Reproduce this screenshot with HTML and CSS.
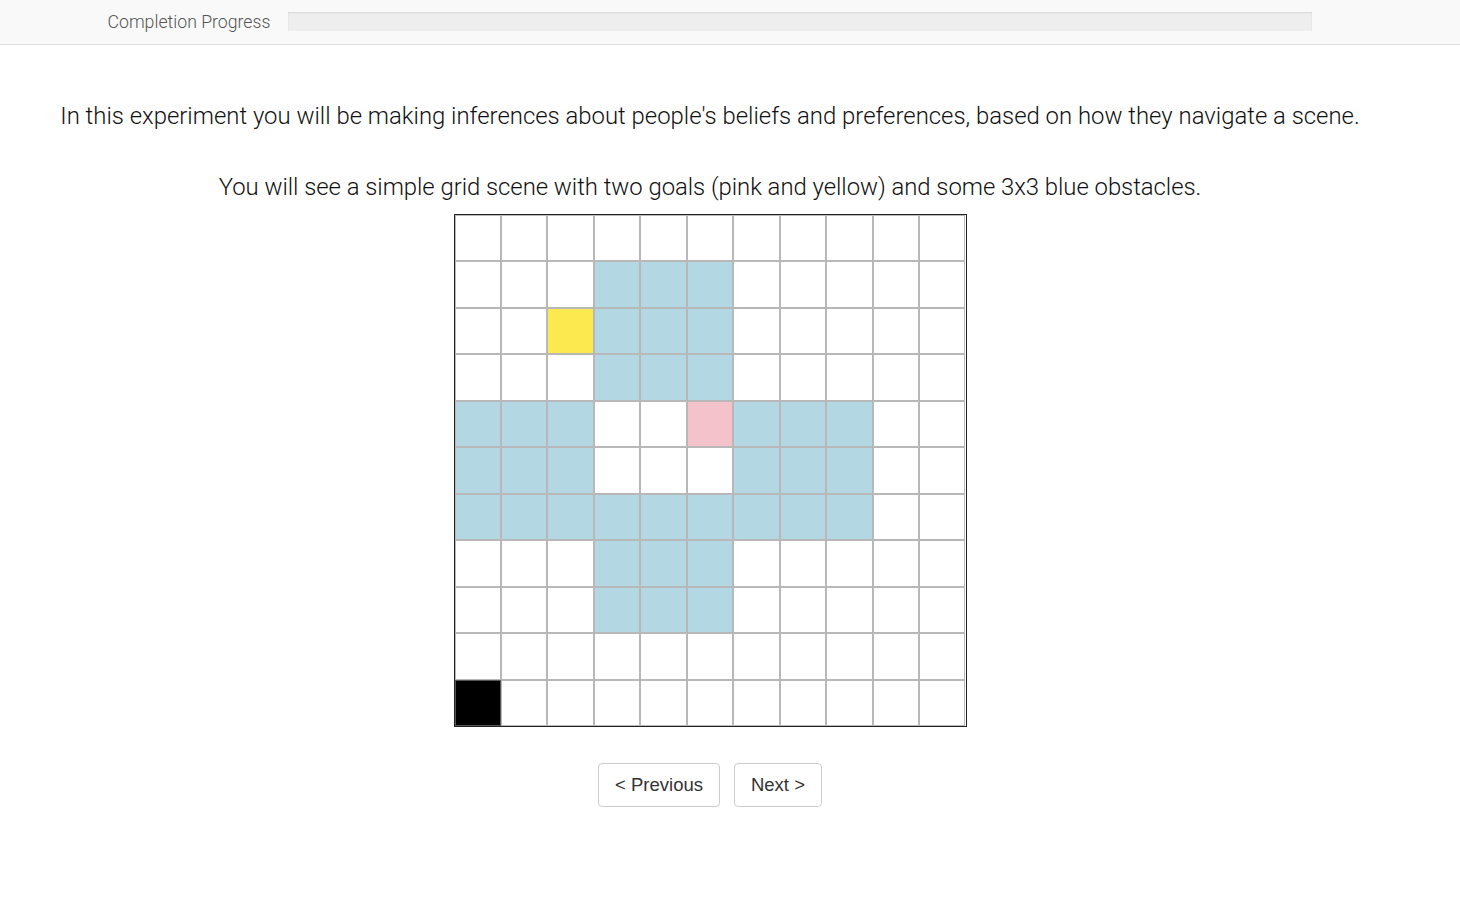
FILE: index.html
```html
<!DOCTYPE html>
<html>
<head>
<meta charset="utf-8">
<link rel="stylesheet" href="styles.css">
</head>
<body>
<header class="progress">
  <div class="progress-inner">
    <span class="progress-label">Completion Progress</span>
    <div class="progress-outer"><div class="progress-inner-bar"></div></div>
  </div>
</header>
<main class="content">
  <p class="line1">In this experiment you will be making inferences about people's beliefs and preferences, based on how they navigate a scene.</p>
  <p class="line2">You will see a simple grid scene with two goals (pink and yellow) and some 3x3 blue obstacles.</p>
  <div class="grid">
    <div class="c"></div><div class="c"></div><div class="c"></div><div class="c"></div><div class="c"></div><div class="c"></div><div class="c"></div><div class="c"></div><div class="c"></div><div class="c"></div><div class="c"></div>
    <div class="c"></div><div class="c"></div><div class="c"></div><div class="c b"></div><div class="c b"></div><div class="c b"></div><div class="c"></div><div class="c"></div><div class="c"></div><div class="c"></div><div class="c"></div>
    <div class="c"></div><div class="c"></div><div class="c y"></div><div class="c b"></div><div class="c b"></div><div class="c b"></div><div class="c"></div><div class="c"></div><div class="c"></div><div class="c"></div><div class="c"></div>
    <div class="c"></div><div class="c"></div><div class="c"></div><div class="c b"></div><div class="c b"></div><div class="c b"></div><div class="c"></div><div class="c"></div><div class="c"></div><div class="c"></div><div class="c"></div>
    <div class="c b"></div><div class="c b"></div><div class="c b"></div><div class="c"></div><div class="c"></div><div class="c p"></div><div class="c b"></div><div class="c b"></div><div class="c b"></div><div class="c"></div><div class="c"></div>
    <div class="c b"></div><div class="c b"></div><div class="c b"></div><div class="c"></div><div class="c"></div><div class="c"></div><div class="c b"></div><div class="c b"></div><div class="c b"></div><div class="c"></div><div class="c"></div>
    <div class="c b"></div><div class="c b"></div><div class="c b"></div><div class="c b"></div><div class="c b"></div><div class="c b"></div><div class="c b"></div><div class="c b"></div><div class="c b"></div><div class="c"></div><div class="c"></div>
    <div class="c"></div><div class="c"></div><div class="c"></div><div class="c b"></div><div class="c b"></div><div class="c b"></div><div class="c"></div><div class="c"></div><div class="c"></div><div class="c"></div><div class="c"></div>
    <div class="c"></div><div class="c"></div><div class="c"></div><div class="c b"></div><div class="c b"></div><div class="c b"></div><div class="c"></div><div class="c"></div><div class="c"></div><div class="c"></div><div class="c"></div>
    <div class="c"></div><div class="c"></div><div class="c"></div><div class="c"></div><div class="c"></div><div class="c"></div><div class="c"></div><div class="c"></div><div class="c"></div><div class="c"></div><div class="c"></div>
    <div class="c k"></div><div class="c"></div><div class="c"></div><div class="c"></div><div class="c"></div><div class="c"></div><div class="c"></div><div class="c"></div><div class="c"></div><div class="c"></div><div class="c"></div>
  </div>
  <div class="nav">
    <button class="btn">&lt; Previous</button>
    <button class="btn">Next &gt;</button>
  </div>
</main>
</body>
</html>
```
FILE: styles.css
```css
html, body {
  margin: 0;
  padding: 0;
  background: #fff;
}
body {
  font-family: Roboto, "Liberation Sans", sans-serif;
  font-weight: 300;
  color: #111;
}
.progress {
  height: 44px;
  background: #f9f9f9;
  border-bottom: 1px solid #dedede;
}
.progress-inner {
  width: 1420px;
  height: 44px;
  display: flex;
  align-items: center;
  justify-content: center;
}
.progress-label {
  font-size: 17.7px;
  color: #555;
  padding-right: 18px;
}
.progress-outer {
  width: 1024px;
  height: 19px;
  background: #eee;
  box-shadow: inset 0 1px 2px rgba(0, 0, 0, 0.1);
  position: relative;
  top: -1px;
}
.progress-inner-bar {
  width: 0;
  height: 100%;
}
.content {
  width: 1420px;
  text-align: center;
}
.content p {
  margin: 0;
  font-size: 23.9px;
  line-height: 38px;
}
.line1 {
  padding-top: 52px;
}
.line2 {
  padding-top: 33px;
  letter-spacing: -0.04px;
}
.grid {
  margin: 8px auto 0;
  width: 513px;
  height: 513px;
  box-sizing: border-box;
  border: 1px solid #222;
  display: grid;
  grid-template-columns: repeat(11, 1fr);
  grid-template-rows: repeat(11, 1fr);
}
.c {
  border: 1px solid #b8b8b8;
  background: #fff;
}
.c.b { background: #b4d7e4; }
.c.y { background: #fce94f; }
.c.p { background: #f4c2cb; }
.c.k { background: #000; border-color: #555; }
.nav {
  margin-top: 36px;
  display: flex;
  justify-content: center;
  gap: 14px;
}
.btn {
  font-family: "Liberation Sans", Arial, sans-serif;
  font-size: 18.5px;
  line-height: 22px;
  color: #333;
  background: #fff;
  border: 1px solid #ccc;
  border-radius: 4px;
  padding: 10px 16px;
  margin: 0;
}
```
